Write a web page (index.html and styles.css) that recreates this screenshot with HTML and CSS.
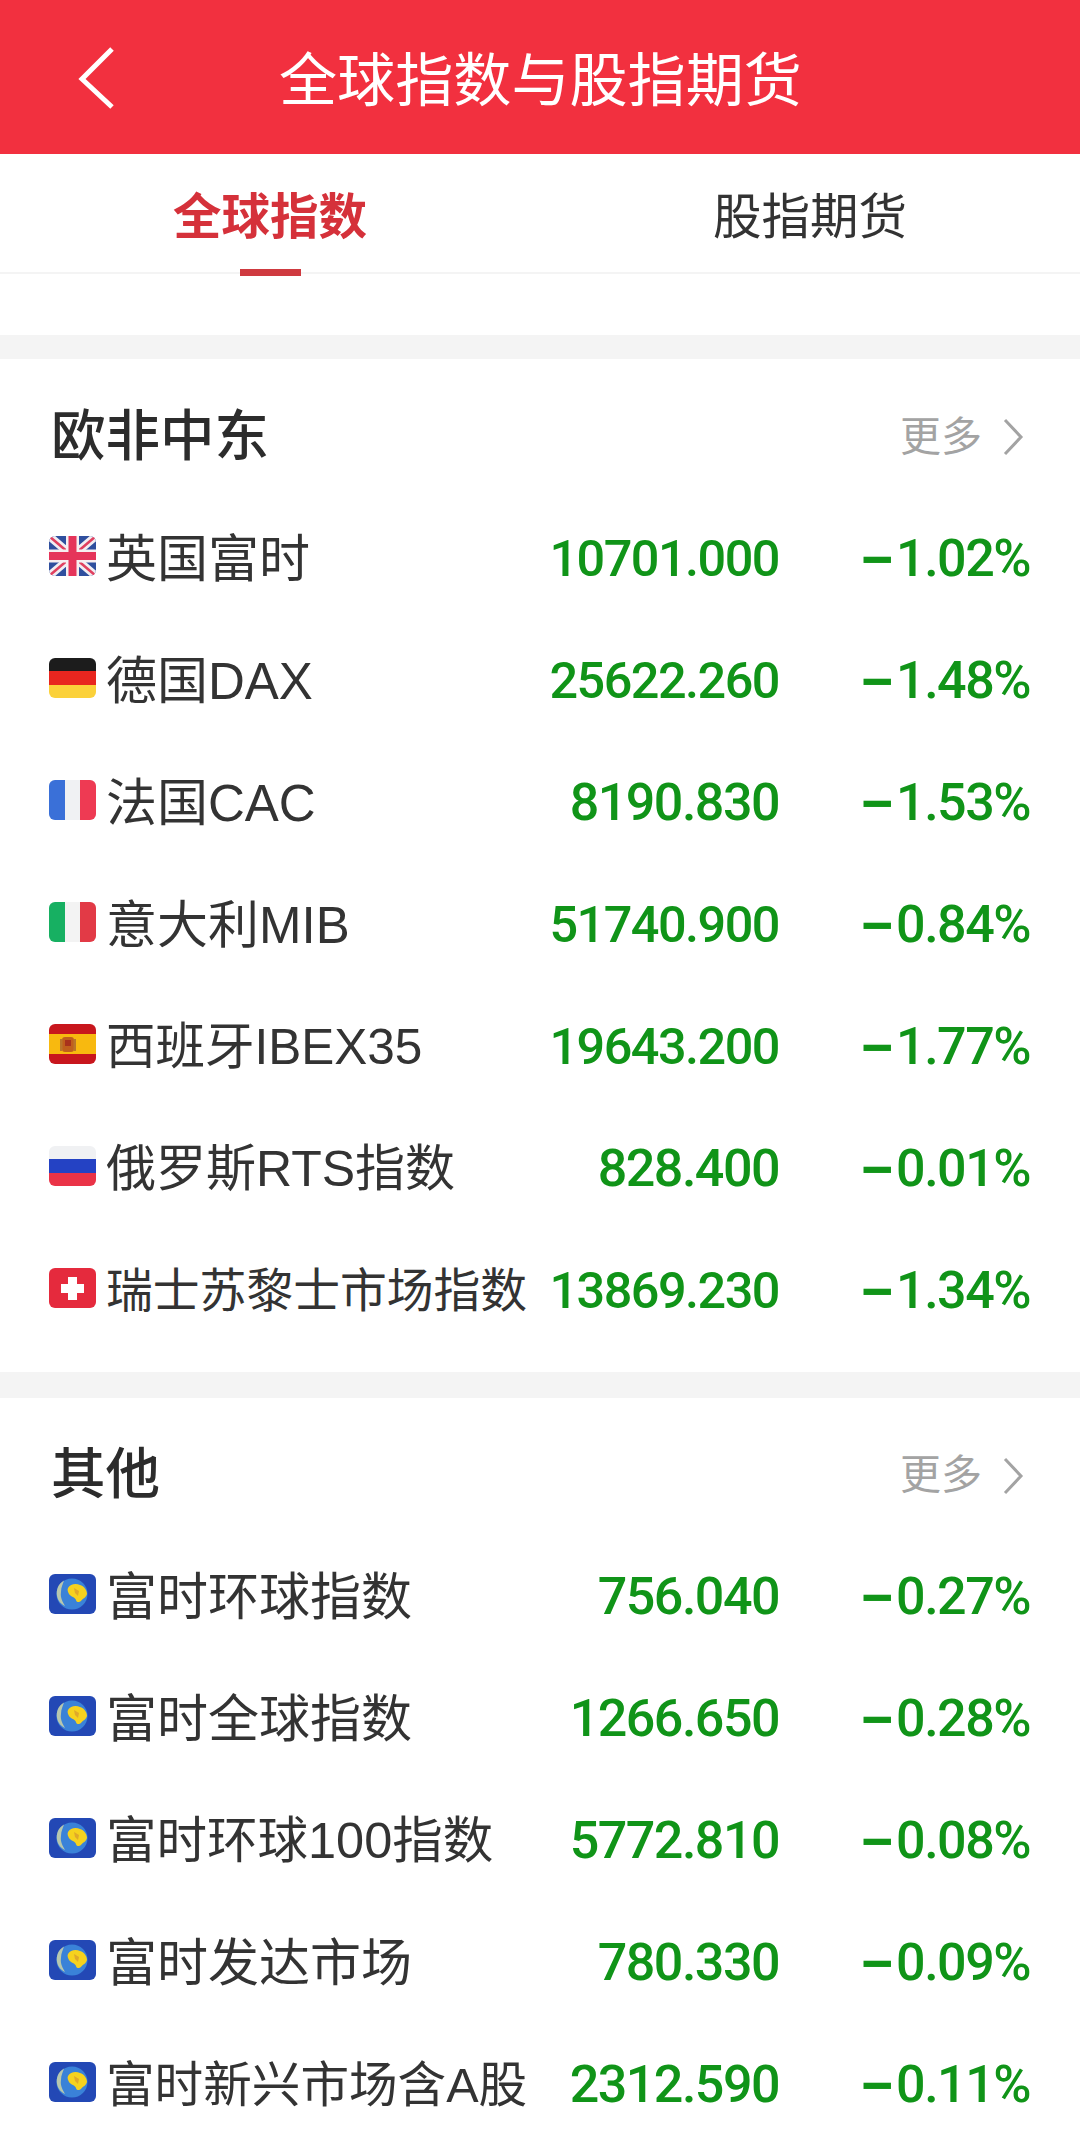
FILE: index.html
```html
<!DOCTYPE html>
<html lang="zh-CN">
<head>
<meta charset="utf-8">
<title>全球指数与股指期货</title>
<link rel="stylesheet" href="styles.css">
</head>
<body>
<svg class="defs" width="0" height="0" aria-hidden="true">
  <defs>
    <clipPath id="fc"><rect width="47" height="40" rx="6"/></clipPath>
    <symbol id="uk" viewBox="0 0 47 40"><g clip-path="url(#fc)">
      <rect width="47" height="40" fill="#2f4f9e"/>
      <path d="M0 0L47 40M47 0L0 40" stroke="#f1eef2" stroke-width="8"/>
      <path d="M0 0L47 40M47 0L0 40" stroke="#e0405f" stroke-width="2.5"/>
      <path d="M23.5 0V40M0 20H47" stroke="#f6eef0" stroke-width="13"/>
      <path d="M23.5 0V40M0 20H47" stroke="#e5345a" stroke-width="8"/>
    </g></symbol>
    <symbol id="de" viewBox="0 0 47 40"><g clip-path="url(#fc)">
      <rect width="47" height="13.5" fill="#1c1c1c"/>
      <rect y="13" width="47" height="14" fill="#e8261f"/>
      <rect y="27" width="47" height="13" fill="#fbd13a"/>
    </g></symbol>
    <symbol id="fr" viewBox="0 0 47 40"><g clip-path="url(#fc)">
      <rect width="47" height="40" fill="#f0f1f3"/>
      <rect width="16" height="40" fill="#3a70d8"/>
      <rect x="31" width="16" height="40" fill="#ee3a53"/>
    </g></symbol>
    <symbol id="it" viewBox="0 0 47 40"><g clip-path="url(#fc)">
      <rect width="47" height="40" fill="#f3f3f3"/>
      <rect width="16" height="40" fill="#17b062"/>
      <rect x="31" width="16" height="40" fill="#e23a46"/>
    </g></symbol>
    <symbol id="es" viewBox="0 0 47 40"><g clip-path="url(#fc)">
      <rect width="47" height="40" fill="#c8161d"/>
      <rect y="10" width="47" height="20" fill="#f8b90f"/>
      <rect x="13" y="13" width="12" height="15" rx="3" fill="#c0601c"/>
      <rect x="11" y="15" width="2.5" height="12" fill="#b9762a"/>
      <rect x="24.500" y="15" width="2.5" height="12" fill="#b9762a"/>
      <rect x="16" y="16" width="6" height="6" fill="#a8321c"/>
    </g></symbol>
    <symbol id="ru" viewBox="0 0 47 40"><g clip-path="url(#fc)">
      <rect width="47" height="13" fill="#f0f1f3"/>
      <rect y="13" width="47" height="14" fill="#2442c4"/>
      <rect y="27" width="47" height="13" fill="#ea3347"/>
    </g></symbol>
    <symbol id="ch" viewBox="0 0 47 40"><g clip-path="url(#fc)">
      <rect width="47" height="40" fill="#e52a3d"/>
      <path d="M19 9h9v7h7v9h-7v7h-9v-7h-7v-9h7z" fill="#fff"/>
    </g></symbol>
    <symbol id="gl" viewBox="0 0 47 40"><g clip-path="url(#fc)">
      <rect width="47" height="40" fill="#2348b5"/>
      <circle cx="23" cy="20" r="15.5" fill="#3a82d8"/>
      <path d="M15 6.500C9 10 7 16 8 22c1 5 4 8 8 10-2-4-5-8-4-14 0-5 2-8 3-11.500z" fill="#b7c7ae"/>
      <path d="M19 14c2-4 8-5 12-3 4 1 7 5 7 9-1 4-4 4-6 7-2 2-5 1-5-1-1-3-5-3-7-6-1-2-2-4-1-6z" fill="#f6d21e"/>
      <path d="M25 14l5 3-1 5-3-3z" fill="#e0a92a"/>
    </g></symbol>
  </defs>
</svg>

<header class="topbar">
  <svg class="back" viewBox="0 0 37 64" width="37" height="64"><path d="M34 3L4 33L34 61" fill="none" stroke="#fff" stroke-width="5"/></svg>
  <h1 class="title">全球指数与股指期货</h1>
</header>

<nav class="tabs">
  <div class="tab tab-on">全球指数</div>
  <div class="tab">股指期货</div>
</nav>

<div class="spacer"></div>

<section class="sec">
  <div class="sec-head">
    <h2 class="sec-title">欧非中东</h2>
    <div class="more">更多<svg class="chev" viewBox="0 0 22 38" width="22" height="38"><path d="M3 2L19 19L3 36" fill="none" stroke="#a3a3a3" stroke-width="3"/></svg></div>
  </div>
  <div class="row"><svg class="flag"><use href="#uk"/></svg><span class="name">英国富时</span><span class="val val-s">10701.000</span><span class="pct"><span class="minus">−</span>1.02%</span></div>
  <div class="row"><svg class="flag"><use href="#de"/></svg><span class="name">德国DAX</span><span class="val val-s">25622.260</span><span class="pct"><span class="minus">−</span>1.48%</span></div>
  <div class="row"><svg class="flag"><use href="#fr"/></svg><span class="name">法国CAC</span><span class="val">8190.830</span><span class="pct"><span class="minus">−</span>1.53%</span></div>
  <div class="row"><svg class="flag"><use href="#it"/></svg><span class="name">意大利MIB</span><span class="val val-s">51740.900</span><span class="pct"><span class="minus">−</span>0.84%</span></div>
  <div class="row"><svg class="flag"><use href="#es"/></svg><span class="name name-s">西班牙IBEX35</span><span class="val val-s">19643.200</span><span class="pct"><span class="minus">−</span>1.77%</span></div>
  <div class="row"><svg class="flag"><use href="#ru"/></svg><span class="name name-m">俄罗斯RTS指数</span><span class="val">828.400</span><span class="pct"><span class="minus">−</span>0.01%</span></div>
  <div class="row"><svg class="flag"><use href="#ch"/></svg><span class="name name-xs">瑞士苏黎士市场指数</span><span class="val val-s">13869.230</span><span class="pct"><span class="minus">−</span>1.34%</span></div>
</section>

<section class="sec sec-2">
  <div class="sec-head">
    <h2 class="sec-title">其他</h2>
    <div class="more">更多<svg class="chev" viewBox="0 0 22 38" width="22" height="38"><path d="M3 2L19 19L3 36" fill="none" stroke="#a3a3a3" stroke-width="3"/></svg></div>
  </div>
  <div class="row"><svg class="flag"><use href="#gl"/></svg><span class="name">富时环球指数</span><span class="val">756.040</span><span class="pct"><span class="minus">−</span>0.27%</span></div>
  <div class="row"><svg class="flag"><use href="#gl"/></svg><span class="name">富时全球指数</span><span class="val">1266.650</span><span class="pct"><span class="minus">−</span>0.28%</span></div>
  <div class="row"><svg class="flag"><use href="#gl"/></svg><span class="name name-l">富时环球100指数</span><span class="val">5772.810</span><span class="pct"><span class="minus">−</span>0.08%</span></div>
  <div class="row"><svg class="flag"><use href="#gl"/></svg><span class="name">富时发达市场</span><span class="val">780.330</span><span class="pct"><span class="minus">−</span>0.09%</span></div>
  <div class="row"><svg class="flag"><use href="#gl"/></svg><span class="name name-fit">富时新兴市场含A股</span><span class="val">2312.590</span><span class="pct"><span class="minus">−</span>0.11%</span></div>
</section>
</body>
</html>
```

FILE: styles.css
```css
* { box-sizing: border-box; }
html, body { margin: 0; padding: 0; }
body {
  width: 1080px;
  height: 2155px;
  overflow: hidden;
  background: #fff;
  color: #333;
  font-family: "Liberation Sans", "Noto Sans CJK SC", sans-serif;
}
.defs { display: block; height: 0; }

.topbar {
  height: 154px;
  background: #f2303f;
  color: #fff;
  display: flex;
  align-items: center;
  padding: 2px 0 0 78px;
}
.back { flex: none; }
.title {
  margin: 6px 0 0 164px;
  font-size: 58.1px;
  font-weight: 400;
  line-height: 1;
  white-space: nowrap;
}

.tabs {
  height: 120px;
  display: grid;
  grid-template-columns: 1fr 1fr;
  border-bottom: 2px solid #f4f4f4;
}
.tab {
  display: flex;
  align-items: center;
  justify-content: center;
  position: relative;
  font-size: 48.5px;
  color: #333;
}
.tab-on { color: #d5313a; font-weight: 700; }
.tab-on::after {
  content: "";
  position: absolute;
  left: 240px;
  width: 61px;
  height: 7px;
  bottom: -4px;
  background: #cf3a40;
}

.spacer { height: 61px; }

.sec { border-top: 24px solid #f4f4f4; padding-bottom: 20px; }
.sec-2 { border-top-width: 26px; padding-bottom: 0; }

.sec-head {
  height: 139px;
  padding: 17px 56px 0 51px;
  display: flex;
  align-items: center;
  justify-content: space-between;
}
.sec-2 .sec-head { height: 138px; }
.sec-title { margin: 0; font-size: 54.5px; font-weight: 500; line-height: 1; color: #2c2c2c; }
.more {
  display: flex;
  align-items: center;
  gap: 20px;
  font-size: 41px;
  color: #a3a3a3;
  line-height: 1;
}
.chev { flex: none; }

.row {
  height: 122px;
  display: grid;
  grid-template-columns: 47px 1fr auto 251px;
  align-items: center;
  padding: 0 50px 0 49px;
}
.flag { width: 47px; height: 40px; margin-bottom: 6px; }
.name {
  margin-left: 10px;
  font-size: 51px;
  line-height: 1;
  white-space: nowrap;
  color: #333;
}
.name-l { font-size: 50.5px; }
.name-m { font-size: 50px; }
.name-s { font-size: 49.5px; }
.name-fit { font-size: 48.6px; }
.name-xs { font-size: 46.8px; }
.val, .pct {
  text-align: right;
  font-family: Roboto, sans-serif;
  font-size: 52px;
  font-weight: 500;
  letter-spacing: -1.5px;
  line-height: 1;
  color: #109418;
}
.val-s { font-size: 50.4px; }
.minus { margin-right: 2px; font-size: 66px; line-height: 0; font-weight: 500; vertical-align: -7px; }
```
